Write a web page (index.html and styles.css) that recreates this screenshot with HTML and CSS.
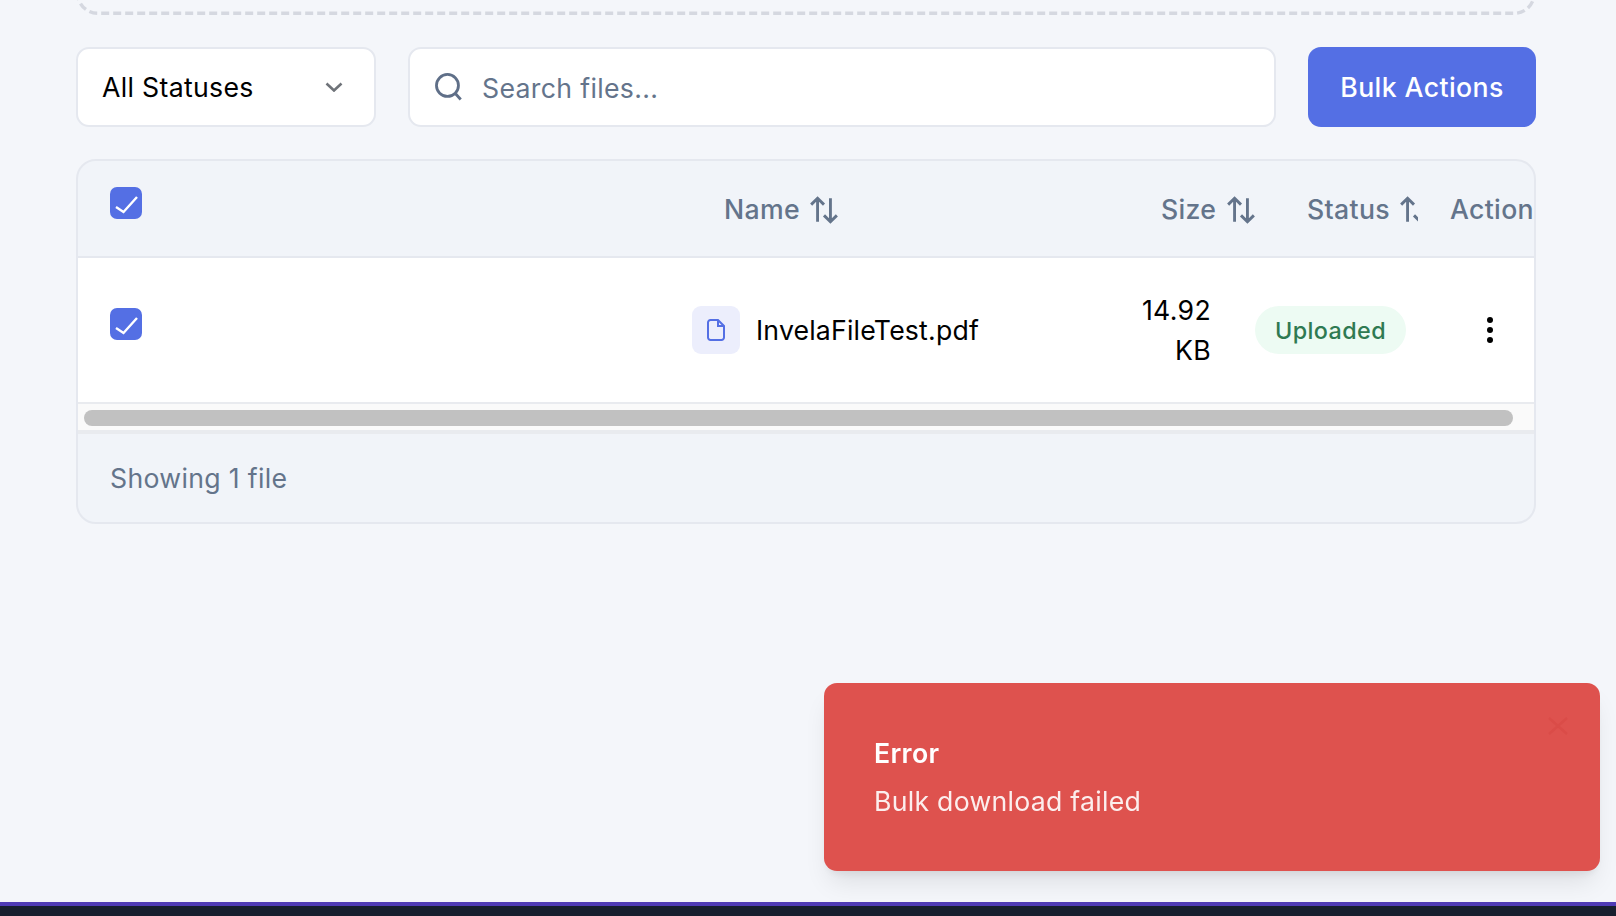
FILE: index.html
```html
<!DOCTYPE html>
<html lang="en">
<head>
  <meta charset="UTF-8">
  <meta name="viewport" content="width=device-width, initial-scale=1.0">
  <title>File Vault</title>
  <link rel="stylesheet" href="styles.css">
</head>
<body>
  <main class="content">
    <!-- Bottom edge of the upload area, the rest is scrolled off -->
    <svg class="dropzone" viewBox="0 0 1460 15" fill="none"><path d="M1.700-6.700A20 20 0 0 0 21.700 13.300H1438.300A20 20 0 0 0 1458.300-6.700"/></svg>

    <!-- Filters -->
    <div class="toolbar">
      <div class="status-select">
        <span>All Statuses</span>
        <svg class="chevron" viewBox="0 0 18 10" fill="none"><path d="M1.5 1.5 9 8.5l7.5-7"/></svg>
      </div>
      <div class="search-box">
        <svg class="search-icon" viewBox="0 0 26 27" fill="none"><circle cx="12" cy="12" r="10.6"/><path d="m19.8 20 5 5.6"/></svg>
        <span>Search files...</span>
      </div>
      <button class="bulk-btn">Bulk Actions</button>
    </div>

    <!-- File table -->
    <div class="file-table">
      <div class="table-row table-head">
        <div class="cell-check">
          <span class="checkbox"><svg viewBox="0 0 32 32" fill="none"><path d="m6 20 7.5 5L27 10"/></svg></span>
        </div>
        <div class="head-name">Name
          <svg class="sort-icon" viewBox="0 0 28 28" fill="none"><path d="M8 25V3M2 9l6-6 6 6M20 3v22M14 19l6 6 6-6"/></svg>
        </div>
        <div class="head-size">Size
          <svg class="sort-icon" viewBox="0 0 28 28" fill="none"><path d="M8 25V3M2 9l6-6 6 6M20 3v22M14 19l6 6 6-6"/></svg>
        </div>
        <div class="head-status">Status
          <svg class="sort-icon" viewBox="0 0 28 28" fill="none"><path d="M8 25V3M2 9l6-6 6 6M20 3v22M14 19l6 6 6-6"/></svg>
        </div>
        <div class="head-action">Action</div>
      </div>

      <div class="table-row file-row">
        <div class="cell-check">
          <span class="checkbox"><svg viewBox="0 0 32 32" fill="none"><path d="m6 20 7.5 5L27 10"/></svg></span>
        </div>
        <div class="cell-name">
          <span class="file-icon">
            <svg viewBox="0 0 18 22" fill="none"><path d="M11 1H3.5A2.5 2.5 0 0 0 1 3.500v15A2.500 2.500 0 0 0 3.500 21h11a2.500 2.500 0 0 0 2.500-2.500V7zM11 1v6h6"/></svg>
          </span>
          InvelaFileTest.pdf
        </div>
        <div class="cell-size">14.92 KB</div>
        <div class="cell-status"><span class="badge">Uploaded</span></div>
        <div class="cell-action">
          <span class="dots"><i></i><i></i><i></i></span>
        </div>
      </div>

      <div class="scroll-track"><div class="scroll-thumb"></div></div>
      <div class="table-footer">Showing 1 file</div>
    </div>
  </main>

  <div class="bottom-bar"></div>

  <!-- Toast -->
  <div class="toast">
    <svg class="toast-close" viewBox="0 0 22 20" fill="none"><path d="m2 2 18 16M20 2 2 18"/></svg>
    <div class="toast-title">Error</div>
    <div class="toast-text">Bulk download failed</div>
  </div>
</body>
</html>
```

FILE: styles.css
```css
* {
  box-sizing: border-box;
}
body {
  font-family: Inter, "Liberation Sans", sans-serif;
  font-size: 26.67px;
  letter-spacing: 0.32px;
  color: #000;
  background-color: #f4f6fa;
  margin: 0;
  height: 100vh;
  overflow: hidden;
  display: flex;
  flex-direction: column;
}
.content {
  flex: 1;
  padding: 0 80px 0 76px;
}
.dropzone {
  display: block;
  width: 1460px;
  height: 15px;
  stroke: #d5d8e0;
  stroke-width: 3.4;
  stroke-dasharray: 8 4;
  stroke-dashoffset: 1.3;
}
.toolbar {
  display: flex;
  gap: 32px;
  height: 80px;
  margin-top: 32px;
}
.status-select {
  width: 300px;
  display: flex;
  align-items: center;
  justify-content: space-between;
  padding: 0 31px 0 24px;
  background-color: #fff;
  border: 2px solid #e5e8ef;
  border-radius: 13px;
}
.chevron {
  width: 18px;
  height: 10px;
  stroke: #6f7379;
  stroke-width: 2.6;
}
.search-box {
  flex: 1;
  display: flex;
  align-items: center;
  gap: 20px;
  padding-left: 25px;
  color: #64748b;
  background-color: #fff;
  border: 2px solid #e5e8ef;
  border-radius: 13px;
}
.search-box span {
  padding-top: 2px;
}
.search-icon {
  width: 27px;
  height: 28px;
  stroke: #5f6f88;
  stroke-width: 2.7;
}
.bulk-btn {
  width: 228px;
  font: inherit;
  font-weight: 500;
  letter-spacing: 0.4px;
  color: #fff;
  background-color: #546fe4;
  border: none;
  border-radius: 13px;
}
.file-table {
  height: 365px;
  margin-top: 32px;
  background-color: #f1f4f9;
  border: 2px solid #e5e8ef;
  border-radius: 20px;
  overflow: hidden;
}
.table-row {
  display: grid;
  grid-template-columns: 614px 438px 125px 163px 116px;
}
.table-head {
  height: 97px;
  align-items: center;
  color: #64748b;
  font-weight: 500;
  border-bottom: 2px solid #e5e8ef;
}
.file-row {
  height: 146px;
  align-items: center;
  background-color: #fff;
  border-bottom: 2px solid #e9ebef;
}
.cell-check {
  align-self: start;
  padding-left: 32px;
}
.table-head .cell-check {
  padding-top: 26px;
}
.file-row .cell-check {
  padding-top: 50px;
}
.checkbox {
  display: block;
  width: 32px;
  height: 32px;
  background-color: #546fe4;
  border-radius: 7px;
}
.checkbox svg {
  display: block;
  stroke: #fff;
  stroke-width: 2.4;
}
.head-name {
  padding-left: 32px;
}
.head-size {
  padding-left: 31px;
  white-space: nowrap;
}
.head-status {
  padding-left: 52px;
  white-space: nowrap;
  overflow: hidden;
}
.head-action {
  padding-left: 32px;
  overflow: hidden;
}
.sort-icon {
  width: 30px;
  height: 30px;
  margin-left: 2px;
  vertical-align: -6px;
  stroke: #64748b;
  stroke-width: 2.7;
}
.cell-name {
  display: flex;
  align-items: center;
  gap: 16px;
  letter-spacing: 0.18px;
}
.file-icon {
  width: 48px;
  height: 48px;
  display: flex;
  align-items: center;
  justify-content: center;
  background-color: #eceefc;
  border-radius: 9px;
}
.file-icon svg {
  width: 18px;
  height: 22px;
  stroke: #546fe4;
  stroke-width: 2;
}
.cell-size {
  width: 81px;
  line-height: 40px;
  text-align: right;
}
.badge {
  display: inline-block;
  height: 48px;
  line-height: 50px;
  padding: 0 20px;
  font-size: 23.34px;
  font-weight: 500;
  letter-spacing: 0.42px;
  color: #2f7a52;
  background-color: #edfbf3;
  border-radius: 24px;
}
.cell-action {
  display: flex;
  padding-left: 69px;
}
.dots {
  display: flex;
  flex-direction: column;
  gap: 4px;
}
.dots i {
  width: 6px;
  height: 6px;
  background-color: #000;
  border-radius: 50%;
}
.scroll-track {
  height: 26px;
  padding: 6px 21px 4px 6px;
  background-color: #fafafa;
}
.scroll-thumb {
  height: 16px;
  background-color: #c1c1c1;
  border-radius: 8px;
}
.table-footer {
  height: 94px;
  padding: 28px 0 0 32px;
  line-height: 32px;
  color: #64748b;
  border-top: 4px solid #e9ebef;
}
.bottom-bar {
  height: 14px;
  background-color: #171f2e;
  border-top: 4px solid #4f3bb5;
}
.toast {
  position: fixed;
  right: 16px;
  bottom: 45px;
  width: 776px;
  height: 188px;
  padding: 54px 50px 0;
  color: #fff;
  background-color: #de524e;
  border-radius: 13px;
  box-shadow: 0 16px 26px -6px rgba(0, 0, 0, 0.1), 0 6px 10px -4px rgba(0, 0, 0, 0.08);
}
.toast-title {
  font-size: 26.67px;
  font-weight: 600;
  line-height: 32px;
}
.toast-text {
  margin-top: 16px;
  font-size: 26.67px;
  line-height: 32px;
  letter-spacing: 0.26px;
  color: rgba(255, 255, 255, 0.9);
}
.toast-close {
  position: absolute;
  top: 33px;
  right: 31px;
  width: 22px;
  height: 20px;
  stroke: #da4c48;
  stroke-width: 2.4;
}
```
